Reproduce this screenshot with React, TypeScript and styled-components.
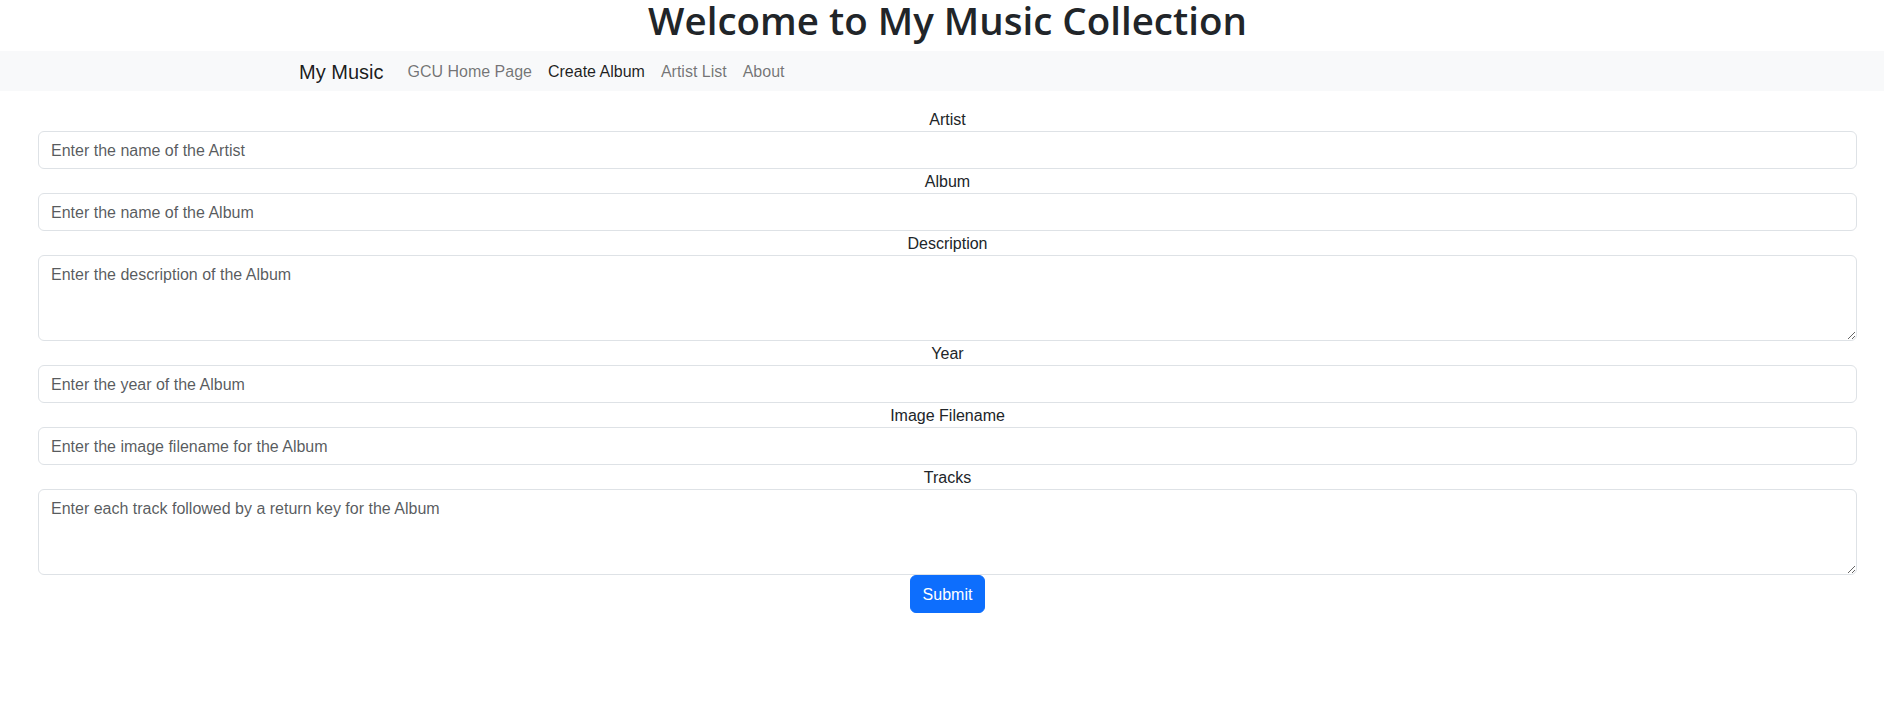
import React from "react";
import styled, { createGlobalStyle } from "styled-components";

const FONT = `"Liberation Sans", Arial, sans-serif`;
const TITLE_FONT = `"Open Sans", "Liberation Sans", Arial, sans-serif`;

const GlobalStyle = createGlobalStyle`
  *, *::before, *::after { box-sizing: border-box; }
  html, body { margin: 0; padding: 0; background: #fff; }
  body {
    font-family: ${FONT};
    font-size: 16px;
    line-height: 1.5;
    color: #212529;
  }
`;

const Page = styled.div`
  display: flex;
  flex-direction: column;
  width: 100%;
`;

const Title = styled.h1`
  margin: 0;
  height: 51px;
  padding-left: 11px;
  font-family: ${TITLE_FONT};
  font-size: 38.5px;
  font-weight: 600;
  line-height: 40px;
  text-align: center;
  color: #212529;
`;

const NavBar = styled.nav`
  height: 40px;
  background: #f8f9fa;
  display: flex;
  align-items: center;
`;

const NavInner = styled.div`
  display: flex;
  align-items: center;
  padding-left: 299px;
  padding-top: 2px;
`;

const Brand = styled.a`
  font-size: 20px;
  line-height: 30px;
  padding: 5px 0;
  margin-right: 16px;
  color: rgba(0, 0, 0, 0.9);
  text-decoration: none;
`;

const NavList = styled.ul`
  display: flex;
  list-style: none;
  margin: 0;
  padding: 0;
`;

const NavLink = styled.a<{ $active?: boolean }>`
  display: block;
  padding: 8px 8px;
  font-size: 16px;
  line-height: 24px;
  text-decoration: none;
  color: ${(p) => (p.$active ? "rgba(0,0,0,0.88)" : "rgba(0,0,0,0.55)")};
`;

const Form = styled.form`
  display: flex;
  flex-direction: column;
  align-items: stretch;
  padding: 16px 27px 0 38px;
`;

const Label = styled.label`
  display: block;
  height: 24px;
  padding-top: 1px;
  text-align: center;
  font-size: 16px;
  line-height: 24px;
  color: #212529;
`;

const fieldCss = `
  display: block;
  width: 100%;
  padding: 7px 12px 5px;
  font-family: ${FONT};
  font-size: 16px;
  line-height: 24px;
  color: #212529;
  background: #fff;
  border: 1px solid #dee2e6;
  border-radius: 6px;
  outline: none;
  &::placeholder { color: rgba(33, 37, 41, 0.75); opacity: 1; }
`;

const Input = styled.input`
  ${fieldCss}
  height: 38px;
`;

const TextArea = styled.textarea`
  ${fieldCss}
  height: 86px;
  resize: vertical;
`;

const ButtonRow = styled.div`
  display: flex;
  justify-content: center;
`;

const SubmitButton = styled.button`
  height: 38px;
  padding: 7px 12px 5px;
  font-family: ${FONT};
  font-size: 16px;
  line-height: 24px;
  color: #fff;
  background: #0d6efd;
  border: 1px solid #0d6efd;
  border-radius: 6px;
  cursor: pointer;
`;

type Field = { id: string; label: string; placeholder: string; multiline?: boolean };

const fields: Field[] = [
  { id: "artist", label: "Artist", placeholder: "Enter the name of the Artist" },
  { id: "album", label: "Album", placeholder: "Enter the name of the Album" },
  { id: "description", label: "Description", placeholder: "Enter the description of the Album", multiline: true },
  { id: "year", label: "Year", placeholder: "Enter the year of the Album" },
  { id: "image", label: "Image Filename", placeholder: "Enter the image filename for the Album" },
  { id: "tracks", label: "Tracks", placeholder: "Enter each track followed by a return key for the Album", multiline: true },
];

export default function App() {
  return (
    <Page>
      <GlobalStyle />
      <Title>Welcome to My Music Collection</Title>
      <NavBar>
        <NavInner>
          <Brand href="#">My Music</Brand>
          <NavList>
            <li><NavLink href="#">GCU Home Page</NavLink></li>
            <li><NavLink href="#" $active>Create Album</NavLink></li>
            <li><NavLink href="#">Artist List</NavLink></li>
            <li><NavLink href="#">About</NavLink></li>
          </NavList>
        </NavInner>
      </NavBar>
      <Form onSubmit={(e) => e.preventDefault()}>
        {fields.map((f) => (
          <React.Fragment key={f.id}>
            <Label htmlFor={f.id}>{f.label}</Label>
            {f.multiline ? (
              <TextArea id={f.id} rows={3} placeholder={f.placeholder} />
            ) : (
              <Input id={f.id} type="text" placeholder={f.placeholder} />
            )}
          </React.Fragment>
        ))}
        <ButtonRow>
          <SubmitButton type="submit">Submit</SubmitButton>
        </ButtonRow>
      </Form>
    </Page>
  );
}
